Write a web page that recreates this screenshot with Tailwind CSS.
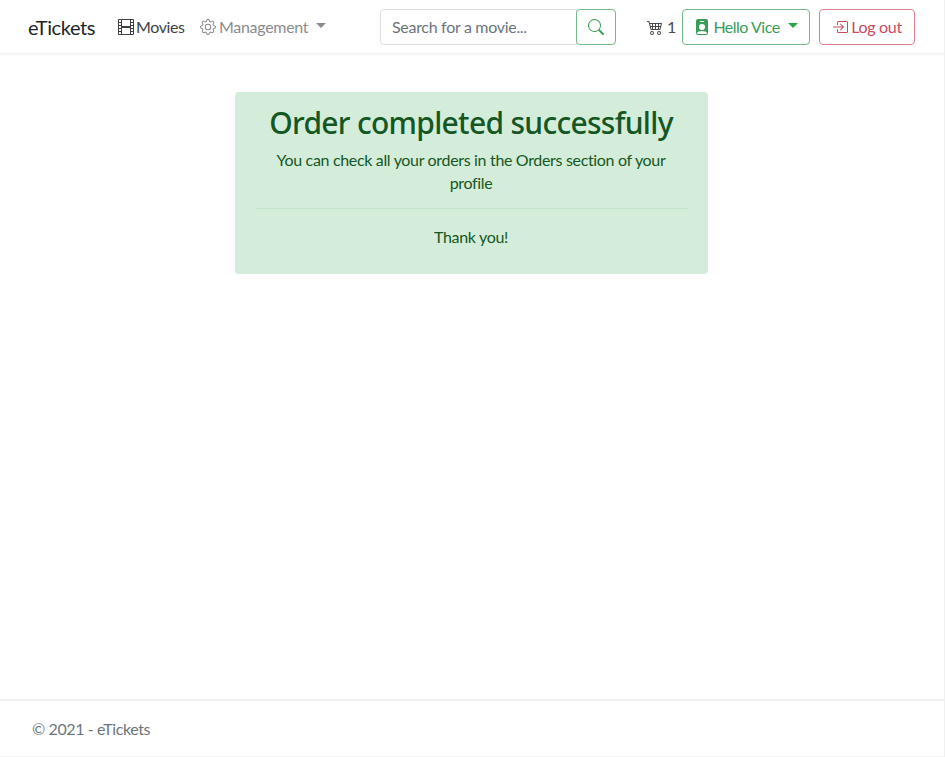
<!DOCTYPE html>
<html lang="en">

<head>
  <meta charset="UTF-8">
  <meta name="viewport" content="width=device-width, initial-scale=1.0">
  <title>eTickets</title>
  <script src="https://cdn.jsdelivr.net/npm/@tailwindcss/browser@4"></script>
</head>

<body class="bg-white h-[757px] overflow-hidden flex flex-col font-['Lato',sans-serif] text-base text-[#212529] border-r border-[#f0f0f0]">
  <!-- Navbar -->
  <nav class="h-[54px] shrink-0 flex items-center pl-[28px] pr-[29px] border-b border-[#f1f1f1] shadow-[0_1px_3px_rgba(0,0,0,0.05)]">
    <a href="#" class="text-[20px] w-[90px] tracking-[-0.4px]">eTickets</a>

    <a href="#" class="flex items-center w-[82px] text-[#3f3f3f] tracking-[-0.4px]">
      <svg class="w-4 h-4 mr-[2px] shrink-0" viewBox="0 0 16 16" fill="currentColor">
        <path d="M0 1a1 1 0 0 1 1-1h14a1 1 0 0 1 1 1v14a1 1 0 0 1-1 1H1a1 1 0 0 1-1-1V1zm4 0v6h8V1H4zm8 8H4v6h8V9zM1 1v2h2V1H1zm2 3H1v2h2V4zM1 7v2h2V7H1zm2 3H1v2h2v-2zm-2 3v2h2v-2H1zM15 1h-2v2h2V1zm-2 3v2h2V4h-2zm2 3h-2v2h2V7zm-2 3v2h2v-2h-2zm2 3h-2v2h2v-2z"/>
      </svg>
      Movies
    </a>

    <a href="#" class="flex items-center text-[#8c8c8c] tracking-[-0.3px]">
      <svg class="w-4 h-4 mr-[3px] shrink-0" viewBox="0 0 16 16" fill="currentColor">
        <path d="M8 4.754a3.246 3.246 0 1 0 0 6.492 3.246 3.246 0 0 0 0-6.492zM5.754 8a2.246 2.246 0 1 1 4.492 0 2.246 2.246 0 0 1-4.492 0z"/>
        <path d="M9.796 1.343c-.527-1.79-3.065-1.79-3.592 0l-.094.319a.873.873 0 0 1-1.255.52l-.292-.16c-1.64-.892-3.433.902-2.54 2.541l.159.292a.873.873 0 0 1-.52 1.255l-.319.094c-1.79.527-1.79 3.065 0 3.592l.319.094a.873.873 0 0 1 .52 1.255l-.16.292c-.892 1.64.901 3.434 2.541 2.54l.292-.159a.873.873 0 0 1 1.255.52l.094.319c.527 1.79 3.065 1.79 3.592 0l.094-.319a.873.873 0 0 1 1.255-.52l.292.16c1.64.893 3.434-.902 2.54-2.541l-.159-.292a.873.873 0 0 1 .52-1.255l.319-.094c1.79-.527 1.79-3.065 0-3.592l-.319-.094a.873.873 0 0 1-.52-1.255l.16-.292c.893-1.64-.902-3.433-2.541-2.54l-.292.159a.873.873 0 0 1-1.255-.52l-.094-.319zm-2.633.283c.246-.835 1.428-.835 1.674 0l.094.319a1.873 1.873 0 0 0 2.693 1.115l.291-.16c.764-.415 1.6.42 1.184 1.185l-.159.292a1.873 1.873 0 0 0 1.116 2.692l.318.094c.835.246.835 1.428 0 1.674l-.319.094a1.873 1.873 0 0 0-1.115 2.693l.16.291c.415.764-.42 1.6-1.185 1.184l-.291-.159a1.873 1.873 0 0 0-2.693 1.116l-.094.318c-.246.835-1.428.835-1.674 0l-.094-.319a1.873 1.873 0 0 0-2.692-1.115l-.292.16c-.764.415-1.6-.42-1.184-1.185l.159-.291A1.873 1.873 0 0 0 1.945 8.93l-.319-.094c-.835-.246-.835-1.428 0-1.674l.319-.094A1.873 1.873 0 0 0 3.06 4.377l-.16-.292c-.415-.764.42-1.6 1.185-1.184l.292.159a1.873 1.873 0 0 0 2.692-1.115l.094-.319z"/>
      </svg>
      Management
      <span class="ml-[8px] mb-[3px] border-x-[5px] border-t-[5px] border-x-transparent border-t-[#8c8c8c]"></span>
    </a>

    <form class="flex ml-auto">
      <input type="text" placeholder="Search for a movie..."
        class="w-[197px] h-[36px] pl-[11px] pr-2 border border-[#dcdfe3] rounded-l-[4px] tracking-[-0.3px] placeholder:text-[#6c757d] outline-none">
      <button type="button" class="w-[40px] h-[36px] -ml-px flex items-center justify-center border border-[#74b98b] rounded-[4px] text-[#3a9d57]">
        <svg class="w-4 h-4" viewBox="0 0 16 16" fill="currentColor">
          <path d="M11.742 10.344a6.5 6.5 0 1 0-1.397 1.398h-.001c.03.04.062.078.098.115l3.85 3.85a1 1 0 0 0 1.415-1.414l-3.85-3.85a1.007 1.007 0 0 0-.115-.1zM12 6.5a5.5 5.5 0 1 1-11 0 5.5 5.5 0 0 1 11 0z"/>
        </svg>
      </button>
    </form>

    <a href="#" class="flex items-center w-[29px] ml-[31px] text-[#4a4a4a]">
      <svg class="w-4 h-4 shrink-0" viewBox="0 0 16 16" fill="currentColor">
        <path d="M0 2.5A.5.5 0 0 1 .5 2H2a.5.5 0 0 1 .485.379L2.89 4H14.5a.5.5 0 0 1 .485.621l-1.5 6A.5.5 0 0 1 13 11H4a.5.5 0 0 1-.485-.379L1.61 3H.5a.5.5 0 0 1-.5-.5zM3.14 5l.5 2H5V5H3.14zM6 5v2h2V5H6zm3 0v2h2V5H9zm3 0v2h1.36l.5-2H12zm1.11 3H12v2h.61l.5-2zM11 8H9v2h2V8zM8 8H6v2h2V8zM5 8H3.89l.5 2H5V8zm0 5a1 1 0 1 0 0 2 1 1 0 0 0 0-2zm-2 1a2 2 0 1 1 4 0 2 2 0 0 1-4 0zm9-1a1 1 0 1 0 0 2 1 1 0 0 0 0-2zm-2 1a2 2 0 1 1 4 0 2 2 0 0 1-4 0z"/>
      </svg>
      <span class="ml-1">1</span>
    </a>

    <button type="button" class="flex items-center justify-center w-[128px] h-[36px] ml-[6px] border border-[#74b98b] rounded-[4px] text-[#3a9d57] tracking-[-0.5px]">
      <svg class="w-4 h-4 mr-[3px] shrink-0" viewBox="0 0 16 16" fill="currentColor">
        <path d="M2 2a2 2 0 0 1 2-2h8a2 2 0 0 1 2 2v12a2 2 0 0 1-2 2H4a2 2 0 0 1-2-2V2zm4.5 0a.5.5 0 0 0 0 1h3a.5.5 0 0 0 0-1h-3zM8 11a3 3 0 1 0 0-6 3 3 0 0 0 0 6zm5 2.755C12.146 12.825 10.623 12 8 12s-4.146.826-5 1.755V14a1 1 0 0 0 1 1h8a1 1 0 0 0 1-1v-.245z"/>
      </svg>
      Hello Vice
      <span class="ml-[8px] mb-[3px] border-x-[5px] border-t-[5px] border-x-transparent border-t-[#28a745]"></span>
    </button>

    <button type="button" class="flex items-center justify-center w-[96px] h-[36px] ml-[9px] border border-[#dc7f8b] rounded-[4px] text-[#cb4a5c] tracking-[-0.3px]">
      <svg class="w-4 h-4 mr-[3px] shrink-0" viewBox="0 0 16 16" fill="currentColor">
        <path fill-rule="evenodd" d="M6 3.5a.5.5 0 0 1 .5-.5h8a.5.5 0 0 1 .5.5v9a.5.5 0 0 1-.5.5h-8a.5.5 0 0 1-.5-.5v-2a.5.5 0 0 0-1 0v2A1.5 1.5 0 0 0 6.5 14h8a1.5 1.5 0 0 0 1.5-1.5v-9A1.5 1.5 0 0 0 14.5 2h-8A1.5 1.5 0 0 0 5 3.5v2a.5.5 0 0 0 1 0v-2z"/>
        <path fill-rule="evenodd" d="M11.854 8.354a.5.5 0 0 0 0-.708l-3-3a.5.5 0 1 0-.708.708L10.293 7.5H1.5a.5.5 0 0 0 0 1h8.793l-2.147 2.146a.5.5 0 0 0 .708.708l3-3z"/>
      </svg>
      Log out
    </button>
  </nav>

  <!-- Order completed -->
  <main class="grow pt-[38px] pr-[2px]">
    <div class="w-[473px] h-[182px] mx-auto px-[20px] pt-[9px] bg-[#d4edda] rounded-[4px] text-center text-[#155724]">
      <h2 class="font-['Noto_Sans',sans-serif] text-[30px] leading-[44px] font-medium tracking-[-0.7px]">Order completed successfully</h2>
      <p class="mt-[3px] leading-[23px] tracking-[-0.33px]">You can check all your orders in the Orders section of your profile</p>
      <hr class="mt-[14px] border-[#c3e6cb]">
      <p class="mt-[16px] leading-[24px] tracking-[-0.33px]">Thank you!</p>
    </div>
  </main>

  <!-- Footer -->
  <footer class="h-[58px] shrink-0 flex items-center pl-[32px] border-t-2 border-b border-[#f1f2f2] text-[#6c757d] tracking-[-0.4px]">
    © 2021 - eTickets
  </footer>
</body>

</html>
